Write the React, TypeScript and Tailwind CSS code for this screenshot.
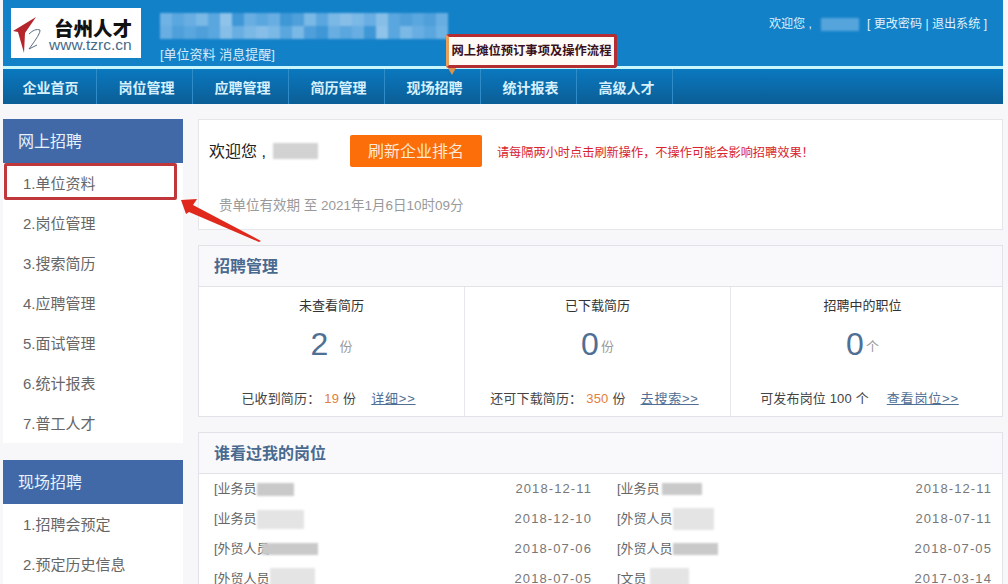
const font = "[font-family:'Liberation_Sans','Noto_Sans_CJK_SC',sans-serif]";

const navItems = ["企业首页", "岗位管理", "应聘管理", "简历管理", "现场招聘", "统计报表", "高级人才"];
const recruitMenu = ["1.单位资料", "2.岗位管理", "3.搜索简历", "4.应聘管理", "5.面试管理", "6.统计报表", "7.普工人才"];
const fairMenu = ["1.招聘会预定", "2.预定历史信息"];

// blurred company name in the header
const mosaic = [
  "bg-[#6fb2e4]", "bg-[#5aa6de]", "bg-[#69aee2]", "bg-[#7ab8e6]", "bg-[#5aa6de]", "bg-[#8fc3ea]", "bg-[#3f97d6]", "bg-[#69aee2]",
  "bg-[#5aa6de]", "bg-[#69aee2]", "bg-[#3f97d6]", "bg-[#4f9fda]", "bg-[#7ab8e6]", "bg-[#5aa6de]", "bg-[#7ab8e6]", "bg-[#86bee8]",
  "bg-[#7ab8e6]", "bg-[#69aee2]", "bg-[#86bee8]", "bg-[#5aa6de]", "bg-[#4f9fda]", "bg-[#5aa6de]", "bg-[#4f9fda]", "bg-[#69aee2]",
];
const mosaicRows = [...mosaic, ...[...mosaic].reverse()];

const stats = [
  { title: "未查看简历", value: "2", unit: "份", gap: "ml-[11px]", pre: "已收到简历：", count: "19", post: "份", link: "详细>>", linkGap: "ml-[15px]", w: "w-[266px]" },
  { title: "已下载简历", value: "0", unit: "份", gap: "ml-[2px]", pre: "还可下载简历：", count: "350", post: "份", link: "去搜索>>", linkGap: "ml-[15px]", w: "w-[266px]" },
  { title: "招聘中的职位", value: "0", unit: "个", gap: "ml-[2px]", pre: "可发布岗位 100 个", count: "", post: "", link: "查看岗位>>", linkGap: "ml-[18px]", w: "flex-1 pr-[8px]" },
];

const visits = [
  [
    { text: "[业务员", patch: "w-[37px] h-[13px] bg-[#c9c9c9]", date: "2018-12-11" },
    { text: "[业务员", patch: "w-[47px] h-[19px] bg-[#e4e4e4]", date: "2018-12-10" },
    { text: "[外贸人员", patch: "w-[56px] h-[12px] bg-[#c9c9c9] -ml-[8px]", date: "2018-07-06" },
    { text: "[外贸人员", patch: "w-[45px] h-[22px] bg-[#e4e4e4]", date: "2018-07-05" },
  ],
  [
    { text: "[业务员", patch: "w-[40px] h-[12px] bg-[#c9c9c9] ml-[2px]", date: "2018-12-11" },
    { text: "[外贸人员", patch: "w-[41px] h-[22px] bg-[#e4e4e4]", date: "2018-07-11" },
    { text: "[外贸人员", patch: "w-[45px] h-[12px] bg-[#c9c9c9]", date: "2018-07-05" },
    { text: "[文员", patch: "w-[39px] h-[22px] bg-[#e4e4e4] ml-[3px]", date: "2017-03-14" },
  ],
];

function SideMenu({ title, items }: { title: string; items: string[] }) {
  return (
    <div>
      <div className="h-[44px] bg-[#4169a8] pl-[15px] pt-[2px] flex items-center text-[16px] text-[#e6f1fb]">{title}</div>
      <div className="bg-white">
        {items.map((item) => (
          <div key={item} className="h-[40px] pl-[20px] pt-[2px] flex items-center text-[15px] text-[#666]">
            {item}
          </div>
        ))}
      </div>
    </div>
  );
}

export default function App() {
  return (
    <div className={`relative w-[1008px] h-[584px] overflow-hidden bg-[#f7f7f9] ${font}`}>
      {/* Header */}
      <div className="mx-[3px] w-[1000px] h-[66px] bg-[#1381c8] flex">
        <div className="ml-[8px] mt-[8px] w-[130px] h-[50px] bg-white relative">
          <svg className="absolute left-0 top-0" width="50" height="50" viewBox="0 0 50 50">
            <path d="M25 9 L2 23 L7 24 L13 45 L14 25 Z" fill="#b5262c" />
            <path d="M18 26 Q24 20 29 22 Q30 25 18 41 L26 37" fill="none" stroke="#5b6f86" strokeWidth="1" />
          </svg>
          <div className="pl-[43px] pt-[11px] text-[19.5px] leading-[20px] font-black text-[#111] whitespace-nowrap">台州人才</div>
          <div className="pl-[38px] text-[15.5px] leading-[12px] text-[#456a8a] whitespace-nowrap">www.tzrc.cn</div>
        </div>
        <div className="ml-[19px] mt-[13px] w-[286px]">
          <div className="grid grid-cols-[repeat(24,12px)] grid-rows-[13px_13px] blur-[1px]">
            {mosaicRows.map((c, i) => (
              <div key={i} className={c} />
            ))}
          </div>
          <div className="mt-[8px] text-[13px] leading-[16px] text-[#d3ecfb] whitespace-nowrap">[单位资料 消息提醒]</div>
        </div>
        <div className="ml-auto mr-[16px] mt-[16px] h-[16px] flex items-center text-[12.1px] text-[#dff1fc] whitespace-nowrap">
          <span>欢迎您 ,</span>
          <span className="ml-[9px] w-[38px] h-[13px] bg-[#56a4dc] blur-[1px]" />
          <span className="ml-[8px]">[ 更改密码 | 退出系统 ]</span>
        </div>
      </div>
      <div className="mx-[3px] w-[1000px] h-[3px] bg-[#c9f6fb]" />

      {/* Nav */}
      <div className="mx-[3px] w-[1000px] h-[35px] bg-gradient-to-b from-[#0a78bf] to-[#0b5e96] flex">
        {navItems.map((item, i) => (
          <div
            key={item}
            className={`${i === 0 ? "w-[94px] pl-[2px]" : "w-[96px] pl-[4px]"} h-full pt-[3px] border-r border-[#2f8cc8] flex items-center justify-center text-[14px] font-bold text-[#d6f0fd]`}
          >
            {item}
          </div>
        ))}
      </div>

      <div className="flex mt-[15px] ml-[3px]">
        {/* Sidebar */}
        <div className="w-[180px] flex flex-col gap-[17px]">
          <SideMenu title="网上招聘" items={recruitMenu} />
          <SideMenu title="现场招聘" items={fairMenu} />
        </div>

        {/* Main */}
        <div className="ml-[15px] w-[805px] flex flex-col gap-[15px]">
          <div className="h-[111px] bg-white border border-[#e6e6ea] pl-[10px]">
            <div className="mt-[15px] h-[32px] flex items-center">
              <span className="pt-[1px] text-[16px] text-[#222]">欢迎您 ,</span>
              <span className="ml-[7px] w-[45px] h-[16px] bg-[#d2d2d2] blur-[1px]" />
              <span className="ml-[32px] w-[132px] h-[32px] pt-[1px] bg-[#fb6e0a] rounded-[2px] flex items-center justify-center text-[16px] text-[#fde8d4]">
                刷新企业排名
              </span>
              <span className="ml-[15px] mt-[4px] text-[12.2px] text-[#d9232e] whitespace-nowrap">请每隔两小时点击刷新操作，不操作可能会影响招聘效果！</span>
            </div>
            <div className="mt-[30px] pl-[10px] text-[13.5px] leading-[18px] text-[#999]">贵单位有效期 至 2021年1月6日10时09分</div>
          </div>

          <div className="h-[172px] bg-white border border-[#e2e2e8] flex flex-col">
            <div className="h-[41px] shrink-0 pt-[2px] bg-[#f9f9fb] border-b border-[#e2e2e8] pl-[15px] flex items-center text-[16px] font-bold text-[#4a6a8f]">
              招聘管理
            </div>
            <div className="flex flex-1">
              {stats.map((s, i) => (
                <div key={s.title} className={`${s.w} ${i < 2 ? "border-r border-[#e8e8ec]" : ""} flex flex-col items-center`}>
                  <div className="mt-[10px] text-[13px] leading-[18px] text-[#333]">{s.title}</div>
                  <div className="mt-[6px] h-[46px] flex items-center">
                    <span className="text-[32px] text-[#4f6f95]">{s.value}</span>
                    <span className={`${s.gap} mt-[6px] text-[13px] text-[#999]`}>{s.unit}</span>
                  </div>
                  <div className="mt-[23px] mr-[6px] text-[13px] tracking-[0.15px] leading-[18px] text-[#444] whitespace-nowrap">
                    {s.pre}
                    {s.count && <span className="ml-[4px] text-[#e0803c]">{s.count}</span>}
                    {s.post && <span className="ml-[4px]">{s.post}</span>}
                    <span className={`${s.linkGap} text-[#4f6f95] underline tracking-[0.8px]`}>{s.link}</span>
                  </div>
                </div>
              ))}
            </div>
          </div>

          <div className="h-[200px] bg-white border border-[#e2e2e8]">
            <div className="h-[41px] pt-[2px] bg-[#f9f9fb] border-b border-[#e2e2e8] pl-[15px] flex items-center text-[16px] font-bold text-[#4a6a8f]">
              谁看过我的岗位
            </div>
            <div className="grid grid-cols-[403px_1fr]">
              {visits.map((col, c) => (
                <div key={c} className="pl-[15px] pr-[10px]">
                  {col.map((row, r) => (
                    <div key={r} className="h-[30px] flex items-center text-[13px] text-[#666]">
                      <span>{row.text}</span>
                      <span className={`${row.patch} blur-[1px]`} />
                      <span className="ml-auto tracking-[1.1px] text-[#777]">{row.date}</span>
                    </div>
                  ))}
                </div>
              ))}
            </div>
          </div>
        </div>
      </div>

      {/* Tooltip over the header */}
      <div className="absolute left-[446px] top-[34px] w-[171px] h-[34px] bg-[#fffaf5] border-[3px] border-[#b32d33] border-l-[#e8a15a] rounded-[3px] flex items-center justify-center text-[12.3px] font-bold text-[#3a1020] whitespace-nowrap">
        网上摊位预订事项及操作流程
      </div>
      <div className="absolute left-[448px] top-[68px] w-0 h-0 border-l-[4px] border-r-[4px] border-t-[7px] border-l-transparent border-r-transparent border-t-[#e0914a]" />

      {/* Red annotation */}
      <div className="absolute left-[4px] top-[163px] w-[173px] h-[37px] border-[3px] border-[#c0373b] rounded-[2px]" />
      <svg className="absolute left-[178px] top-[196px]" width="88" height="50" viewBox="178 196 88 50">
        <path d="M181 200 L197 199 L193 205 L261 241 L259 242 L189 212 L186 214 Z" fill="#e0281c" />
      </svg>
    </div>
  );
}
